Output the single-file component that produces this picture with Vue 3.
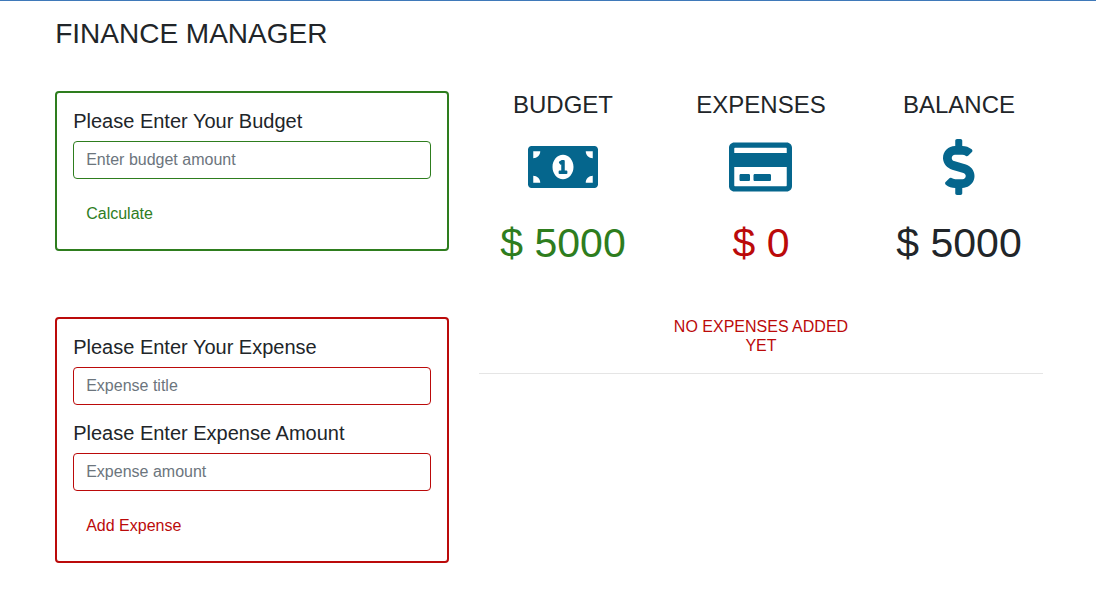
<script setup>
const stats = [
  { key: 'budget', label: 'BUDGET', value: '$ 5000', tone: 'green', vb: '0 0 640 512', w: 70, d: 'M352 288h-16v-88c0-4.42-3.58-8-8-8h-13.58c-4.74 0-9.37 1.4-13.31 4.03l-15.33 10.22a7.978 7.978 0 0 0-2.22 11.09l8.88 13.31a7.978 7.978 0 0 0 11.09 2.22l.47-.31V288h-16c-4.42 0-8 3.58-8 8v16c0 4.42 3.58 8 8 8h64c4.42 0 8-3.58 8-8v-16c0-4.42-3.58-8-8-8zM608 64H32C14.33 64 0 78.33 0 96v320c0 17.67 14.33 32 32 32h576c17.67 0 32-14.33 32-32V96c0-17.67-14.33-32-32-32zM48 400v-64c35.35 0 64 28.65 64 64H48zm0-224v-64h64c0 35.35-28.65 64-64 64zm272 192c-53.02 0-96-50.15-96-112 0-61.86 42.98-112 96-112s96 50.14 96 112c0 61.87-43 112-96 112zm272 32h-64c0-35.35 28.65-64 64-64v64zm0-224c-35.35 0-64-28.65-64-64h64v64z' },
  { key: 'expenses', label: 'EXPENSES', value: '$ 0', tone: 'red', vb: '0 0 576 512', w: 63, d: 'M527.9 32H48.1C21.5 32 0 53.5 0 80v352c0 26.5 21.5 48 48.1 48h479.8c26.6 0 48.1-21.5 48.1-48V80c0-26.5-21.5-48-48.1-48zM54.1 80h467.8c3.3 0 6 2.7 6 6v42H48.1V86c0-3.3 2.7-6 6-6zm467.8 352H54.1c-3.3 0-6-2.7-6-6V256h479.8v170c0 3.3-2.7 6-6 6zM192 332v40c0 6.6-5.4 12-12 12h-72c-6.6 0-12-5.4-12-12v-40c0-6.6 5.4-12 12-12h72c6.6 0 12 5.4 12 12zm192 0v40c0 6.6-5.4 12-12 12H236c-6.6 0-12-5.4-12-12v-40c0-6.6 5.4-12 12-12h136c6.6 0 12 5.4 12 12z' },
  { key: 'balance', label: 'BALANCE', value: '$ 5000', tone: 'dark', vb: '0 0 288 512', w: 31.5, d: 'M209.2 233.4l-108-31.6C88.7 198.2 80 186.5 80 173.5c0-16.3 13.2-29.5 29.5-29.5h66.3c12.2 0 24.2 3.7 34.2 10.5 6.1 4.1 14.3 3.1 19.5-2l34.8-34c7.1-6.9 6.1-18.4-1.8-24.5C238 74.8 207.4 64.1 176 64V16c0-8.8-7.2-16-16-16h-32c-8.8 0-16 7.2-16 16v48h-2.5C45.8 64-5.4 118.7.5 183.6c4.2 46.1 39.4 83.6 83.8 96.6l102.5 30c12.5 3.7 21.2 15.3 21.2 28.3 0 16.3-13.2 29.5-29.5 29.5h-66.3C100 368 88 364.3 78 357.5c-6.1-4.1-14.3-3.1-19.5 2l-34.8 34c-7.1 6.9-6.1 18.4 1.8 24.5 24.5 19.2 55.1 29.9 86.5 30v48c0 8.8 7.2 16 16 16h32c8.8 0 16-7.2 16-16v-48.2c46.6-.9 90.3-28.6 105.7-72.7 21.5-61.6-14.6-124.8-72.5-141.7z' }
]
</script>

<template>
  <div class="page">
    <h1 class="title">FINANCE MANAGER</h1>
    <div class="layout">
      <div class="left">
        <form class="card green-card" @submit.prevent>
          <label class="field-label">Please Enter Your Budget</label>
          <input class="input" type="text" placeholder="Enter budget amount" />
          <button class="action green-text" type="button">Calculate</button>
        </form>
        <form class="card red-card" @submit.prevent>
          <label class="field-label">Please Enter Your Expense</label>
          <input class="input" type="text" placeholder="Expense title" />
          <label class="field-label">Please Enter Expense Amount</label>
          <input class="input" type="text" placeholder="Expense amount" />
          <button class="action red-text" type="button">Add Expense</button>
        </form>
      </div>
      <div class="right">
        <div class="stats">
          <div v-for="s in stats" :key="s.key" class="stat">
            <h4 class="stat-label">{{ s.label }}</h4>
            <svg class="stat-icon" :viewBox="s.vb" :width="s.w" height="56" aria-hidden="true">
              <path :d="s.d" fill="currentColor" />
            </svg>
            <div class="stat-value" :class="s.tone + '-text'">{{ s.value }}</div>
          </div>
        </div>
        <div class="empty-wrap">
          <p class="empty">NO EXPENSES ADDED YET</p>
        </div>
        <hr class="rule" />
      </div>
    </div>
  </div>
</template>

<style>
html, body { margin: 0; background: #fff; }
</style>

<style scoped>
.page {
  box-sizing: border-box;
  height: 611px;
  border-top: 1px solid #3f79b9;
  padding: 0 53px 0 55.2px;
  font-family: "Liberation Sans", Arial, sans-serif;
  color: #212529;
  font-size: 16px;
  line-height: 1.5;
}
.title {
  margin: 16px 0 0;
  font-size: 28px;
  font-weight: 400;
  line-height: 34px;
}
.layout {
  display: grid;
  grid-template-columns: 393.8px 564px;
  column-gap: 30px;
  margin-top: 40px;
}
.left {
  display: flex;
  flex-direction: column;
  gap: 66px;
}
.card {
  box-sizing: border-box;
  display: flex;
  flex-direction: column;
  align-items: stretch;
  padding: 16px;
  border: 2px solid;
  border-radius: 4px;
}
.green-card { border-color: #2e7d1e; height: 160px; }
.red-card { border-color: #bb0a0a; height: 246px; }
.field-label {
  font-size: 20px;
  line-height: 24px;
  margin-bottom: 8px;
}
.input {
  box-sizing: border-box;
  height: 38px;
  width: 100%;
  margin-bottom: 16px;
  padding: 6px 12px;
  border: 1px solid;
  border-radius: 4px;
  background: #fff;
  font: inherit;
  color: #495057;
  outline: none;
}
.input::placeholder { color: #6c757d; opacity: 1; }
.green-card .input { border-color: #2e7d1e; }
.red-card .input { border-color: #bb0a0a; }
.action {
  align-self: flex-start;
  height: 38px;
  padding: 6px 12px;
  border: 1px solid transparent;
  background: transparent;
  font: inherit;
  cursor: pointer;
}
.green-text { color: #2e7d1e; }
.red-text { color: #bb0a0a; }
.dark-text { color: #212529; }
.stats {
  display: grid;
  grid-template-columns: repeat(3, 198px);
  margin: -1px -15px 0;
}
.stat {
  display: flex;
  flex-direction: column;
  align-items: center;
}
.stat-label {
  margin: 0;
  font-size: 24px;
  font-weight: 400;
  line-height: 29px;
}
.stat-icon {
  display: block;
  margin-top: 20px;
  color: #05668d;
}
.stat-value {
  margin-top: 23px;
  font-size: 41px;
  line-height: 50px;
}
.empty-wrap {
  display: flex;
  justify-content: center;
  margin-top: 49px;
}
.empty {
  width: 198px;
  margin: 0;
  text-align: center;
  color: #bb0a0a;
  line-height: 19px;
}
.rule {
  margin: 18px 0 0;
  border: 0;
  border-top: 1px solid rgba(0, 0, 0, 0.1);
}
</style>
